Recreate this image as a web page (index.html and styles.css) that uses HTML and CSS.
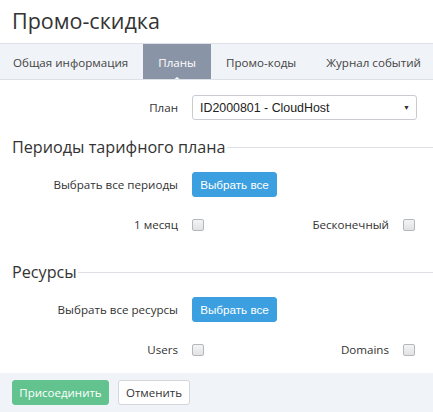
FILE: index.html
```html
<!DOCTYPE html>
<html lang="ru">
<head>
<meta charset="utf-8">
<link rel="stylesheet" href="styles.css">
</head>
<body>
<div class="page">
  <h1 class="title">Промо-скидка</h1>
  <nav class="tabs">
    <span class="tab">Общая информация</span>
    <span class="tab active">Планы</span>
    <span class="tab">Промо-коды</span>
    <span class="tab">Журнал событий</span>
  </nav>
  <div class="content">
    <div class="row plan-row">
      <label class="lbl">План</label>
      <div class="select">
        <span>ID2000801 - CloudHost</span>
        <span class="caret">&#9660;</span>
      </div>
    </div>

    <div class="section">
      <h2 class="section-title">Периоды тарифного плана</h2>
      <span class="rule"></span>
    </div>
    <div class="row btn-row">
      <label class="lbl">Выбрать все периоды</label>
      <button class="btn btn-blue">Выбрать все</button>
    </div>
    <div class="check-row">
      <label class="lbl">1 месяц</label>
      <span class="cb"></span>
      <label class="lbl">Бесконечный</label>
      <span class="cb"></span>
    </div>

    <div class="section section2">
      <h2 class="section-title">Ресурсы</h2>
      <span class="rule"></span>
    </div>
    <div class="row btn-row">
      <label class="lbl">Выбрать все ресурсы</label>
      <button class="btn btn-blue">Выбрать все</button>
    </div>
    <div class="check-row">
      <label class="lbl">Users</label>
      <span class="cb"></span>
      <label class="lbl">Domains</label>
      <span class="cb"></span>
    </div>
  </div>
  <footer class="footer">
    <button class="btn btn-green">Присоединить</button>
    <button class="btn btn-white">Отменить</button>
  </footer>
</div>
</body>
</html>
```

FILE: styles.css
```css
* { box-sizing: border-box; }
html, body { margin: 0; padding: 0; background: #fff; }
body {
  font-family: "Open Sans", "Liberation Sans", sans-serif;
  color: #333;
  width: 433px;
  height: 412px;
  overflow: hidden;
}
.page { display: flex; flex-direction: column; height: 412px; }
.title {
  margin: 0;
  font-weight: 400;
  font-size: 21.5px;
  line-height: 30px;
  padding: 6px 0 7px 12px;
  color: #333;
}
.tabs {
  display: flex;
  height: 37px;
  background: #f0f3f7;
  border-top: 1px solid #dce1e7;
  border-bottom: 1px solid #dce1e7;
  overflow: hidden;
}
.tab {
  position: relative;
  display: flex;
  align-items: center;
  flex-shrink: 0;
  white-space: nowrap;
  padding: 0 15px;
  font-size: 11.6px;
  color: #444;
  height: 36px;
}
.tab:first-child { margin-left: -2px; }
.tab.active {
  background: #8994a6;
  color: #fff;
}
.tab.active::after {
  content: "";
  position: absolute;
  left: 50%;
  bottom: -1px;
  margin-left: -5px;
  border-left: 5px solid transparent;
  border-right: 5px solid transparent;
  border-bottom: 4px solid #fff;
}
.content { flex: 1; padding-top: 15px; }
.row { display: flex; align-items: center; padding-left: 12px; }
.lbl {
  font-size: 11.6px;
  color: #333;
  text-align: right;
  white-space: nowrap;
}
.row .lbl { width: 166px; margin-right: 14px; }
.plan-row { height: 25px; }
.select {
  width: 225px;
  height: 25px;
  border: 1px solid #c8ccd1;
  border-radius: 3px;
  display: flex;
  align-items: center;
  justify-content: space-between;
  padding: 0 6px 0 7px;
  font-family: "Liberation Sans", Arial, sans-serif;
  font-size: 12.4px;
  color: #222;
}
.caret { font-size: 7px; color: #333; }
.section {
  display: flex;
  align-items: center;
  padding-left: 12px;
  margin-top: 15px;
  height: 24px;
}
.section2 { margin-top: 29px; }
.section-title {
  margin: 0;
  font-size: 16.2px;
  font-weight: 400;
  color: #333;
  white-space: nowrap;
}
.rule { flex: 1; height: 1px; background: #dcdfe3; margin-left: 1px; }
.btn-row { margin-top: 13px; height: 25px; }
.btn {
  font-family: "Open Sans", "Liberation Sans", sans-serif;
  font-size: 11.5px;
  border-radius: 3px;
  height: 25px;
  padding: 0;
  cursor: pointer;
}
.btn-blue {
  background: #3c9fe0;
  border: 1px solid #3c9fe0;
  color: #fff;
  width: 85px;
  font-family: "Liberation Sans", Arial, sans-serif;
  font-size: 11.7px;
}
.check-row {
  display: grid;
  grid-template-columns: 166px 12px 1fr 12px;
  column-gap: 14px;
  align-items: center;
  padding-left: 12px;
  margin-top: 20px;
  height: 14px;
  padding-right: 18px;
}
.cb {
  width: 12px;
  height: 12px;
  border: 1px solid #b4b8bd;
  border-radius: 2px;
  background: linear-gradient(#f4f4f4, #e2e2e2);
}
.footer {
  height: 39px;
  background: #f0f3f7;
  display: flex;
  align-items: center;
  gap: 9px;
  padding-left: 12px;
}
.btn-green {
  background: #62c38f;
  border: 1px solid #62c38f;
  color: #fff;
  width: 97px;
}
.btn-white {
  background: #fff;
  border: 1px solid #d3d6da;
  color: #333;
  width: 72px;
}
```
